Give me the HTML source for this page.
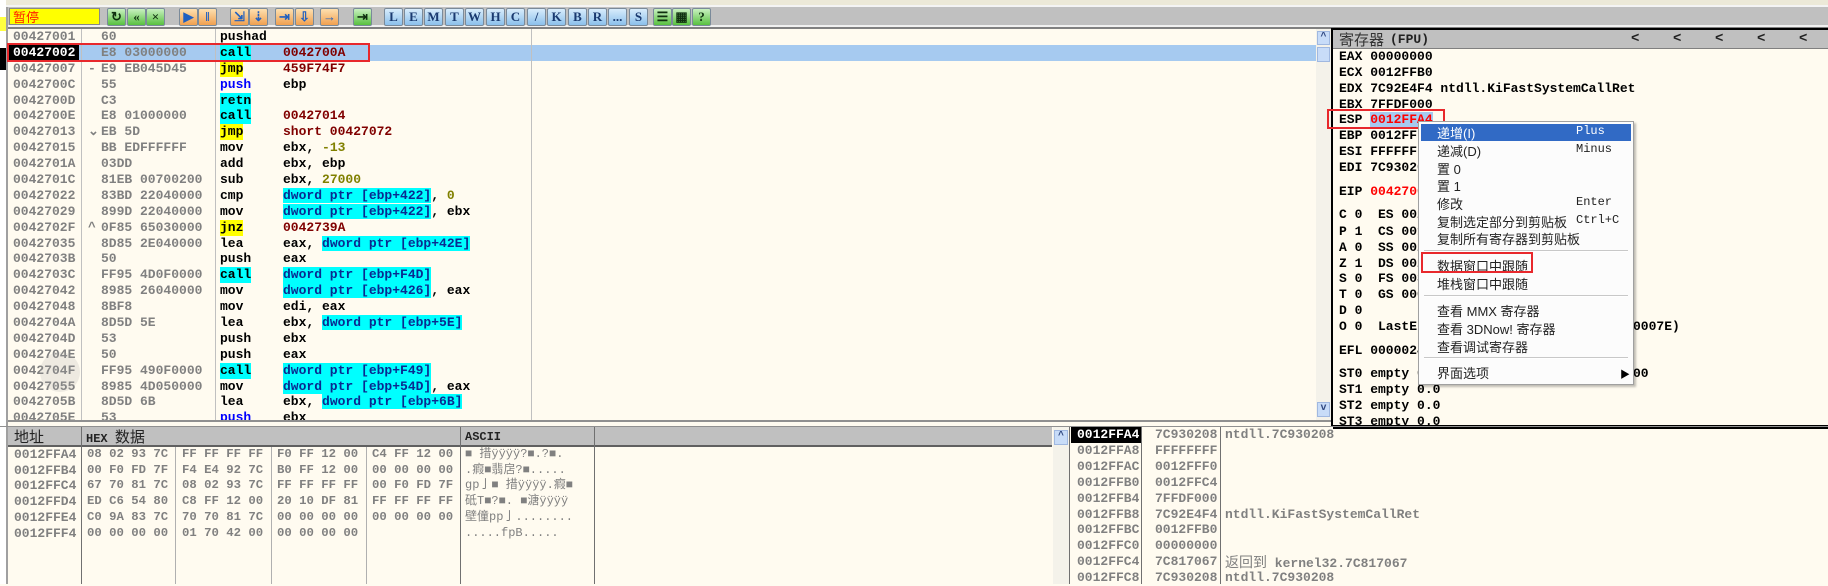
<!DOCTYPE html>
<html><head><meta charset="utf-8">
<style>
*{margin:0;padding:0;box-sizing:border-box}
body{width:1828px;height:584px;overflow:hidden;background:#fffbf0;position:relative;font-family:"Liberation Mono","Noto Sans CJK SC",monospace;font-weight:bold;font-size:13px}
.abs{position:absolute}
.tb{position:absolute;top:8px;width:19px;height:18px;border:1px solid #7a8a9a;border-radius:2px;font-family:"Liberation Serif",serif;font-size:13px;color:#1a3a70;text-align:center;line-height:16px;background:linear-gradient(#d8ecfc,#8cc0ec)}
.tb.o{background:linear-gradient(#fde0b0,#f0a050);color:#2060c0}
.tb.g{background:linear-gradient(#c8f0c0,#58c040);color:#103010}
#dis{position:absolute;left:8px;top:29px;width:1308px;height:391px;overflow:hidden}
.r{position:relative;height:15.9px;line-height:15.9px;white-space:pre}
.r span{position:absolute;top:0}
.ad{left:5px;color:#808080}
.hx{left:93px;color:#808080}
.mk{left:80px;color:#808080}
.mn{left:212px;color:#000}
.op{left:275px;color:#000}
.c{background:#00ffff}
.y{background:#ffff00}
.b{color:#0000ff}
.dr{color:#800000}
.ol{color:#808000}
.dp{background:#00ffff;color:#0a2a90}
.reg{position:absolute;left:1339px;white-space:pre;color:#000;line-height:16px}
.dm{position:absolute;white-space:pre;color:#808080;line-height:15.7px}
.hg{position:absolute;white-space:pre;color:#808080;line-height:15.7px;font-size:12.3px;top:447px}
.st{position:absolute;white-space:pre;color:#808080;line-height:15.9px}
.cm{position:absolute;left:1225px;white-space:pre;color:#808080;height:16px;line-height:16px}
.mi{position:absolute;left:1437px;font-family:"Liberation Sans","Noto Sans CJK SC",sans-serif;font-weight:normal;font-size:13px;color:#222;white-space:pre}
.sc{position:absolute;left:1576px;font-family:"Liberation Mono",monospace;font-weight:normal;font-size:12px;color:#222}
.sep{position:absolute;left:1424px;width:204px;height:2px;border-top:1px solid #c8c8c8;border-bottom:1px solid #fff}
</style></head><body>
<div class="abs" style="left:0;top:0;width:1828px;height:5px;background:#ece9d8"></div>
<div class="abs" style="left:0;top:5px;width:1828px;height:2px;background:#f4f4f4"></div>
<div class="abs" style="left:0;top:7px;width:1828px;height:19px;background:#c0c0c0"></div>
<div class="abs" style="left:0;top:25px;width:1828px;height:2px;background:#f0f0f0"></div>
<div class="abs" style="left:0;top:27px;width:1828px;height:2px;background:#808080"></div>
<div class="abs" style="left:0;top:0;width:6px;height:584px;background:#fff"></div>
<div class="abs" style="left:0;top:17px;width:6px;height:14px;background:#ffff40"></div>
<div class="abs" style="left:0;top:48px;width:6px;height:22px;background:#000"></div>
<div class="abs" style="left:6px;top:7px;width:2px;height:577px;background:#a0a0a0"></div>
<div class="abs" style="left:9px;top:8px;width:91px;height:17px;background:#ffff00;border:1px solid #888;color:#ff2000;font-family:'Noto Sans CJK SC',sans-serif;font-size:13px;font-weight:normal;line-height:15px;padding-left:3px">暂停</div>
<div class="tb g" style="left:107px">↻</div>
<div class="tb g" style="left:127px">«</div>
<div class="tb g" style="left:146px">×</div>
<div class="tb o" style="left:179px">▶</div>
<div class="tb o" style="left:198px">‖</div>
<div class="tb o" style="left:230px">⇲</div>
<div class="tb o" style="left:249px">⇣</div>
<div class="tb o" style="left:275px">⇥</div>
<div class="tb o" style="left:295px">⇩</div>
<div class="tb o" style="left:320px">→</div>
<div class="tb g" style="left:353px">⇥</div>
<div class="tb" style="left:384px">L</div>
<div class="tb" style="left:404px">E</div>
<div class="tb" style="left:424px">M</div>
<div class="tb" style="left:445px">T</div>
<div class="tb" style="left:465px">W</div>
<div class="tb" style="left:486px">H</div>
<div class="tb" style="left:506px">C</div>
<div class="tb" style="left:527px">/</div>
<div class="tb" style="left:547px">K</div>
<div class="tb" style="left:568px">B</div>
<div class="tb" style="left:588px">R</div>
<div class="tb" style="left:608px">...</div>
<div class="tb" style="left:629px">S</div>
<div class="tb g" style="left:653px">☰</div>
<div class="tb g" style="left:672px">▦</div>
<div class="tb g" style="left:692px">?</div>

<div class="abs" style="left:8px;top:45px;width:1308px;height:16px;background:#a6caf0"></div>
<div class="abs" style="left:81px;top:29px;width:1px;height:391px;background:#c0c0c0"></div>
<div class="abs" style="left:215px;top:29px;width:1px;height:391px;background:#c0c0c0"></div>
<div class="abs" style="left:531px;top:29px;width:1px;height:391px;background:#c0c0c0"></div>
<div id="dis">
<div class="r"><span class="ad">00427001</span><span class="hx">60</span><span class="mn">pushad</span></div>
<div class="r"><span class="ad" style="left:1px;background:#000;color:#fff;padding:0 4px">00427002</span><span class="hx">E8 03000000</span><span class="mn c">call</span><span class="op dr">0042700A</span></div>
<div class="r"><span class="ad">00427007</span><span class="mk">-</span><span class="hx">E9 EB045D45</span><span class="mn y">jmp</span><span class="op dr">459F74F7</span></div>
<div class="r"><span class="ad">0042700C</span><span class="hx">55</span><span class="mn b">push</span><span class="op">ebp</span></div>
<div class="r"><span class="ad">0042700D</span><span class="hx">C3</span><span class="mn c">retn</span></div>
<div class="r"><span class="ad">0042700E</span><span class="hx">E8 01000000</span><span class="mn c">call</span><span class="op dr">00427014</span></div>
<div class="r"><span class="ad">00427013</span><span class="mk">⌄</span><span class="hx">EB 5D</span><span class="mn y">jmp</span><span class="op dr">short 00427072</span></div>
<div class="r"><span class="ad">00427015</span><span class="hx">BB EDFFFFFF</span><span class="mn">mov</span><span class="op">ebx, <span class="ol" style="position:static">-13</span></span></div>
<div class="r"><span class="ad">0042701A</span><span class="hx">03DD</span><span class="mn">add</span><span class="op">ebx, ebp</span></div>
<div class="r"><span class="ad">0042701C</span><span class="hx">81EB 00700200</span><span class="mn">sub</span><span class="op">ebx, <span class="ol" style="position:static">27000</span></span></div>
<div class="r"><span class="ad">00427022</span><span class="hx">83BD 22040000</span><span class="mn">cmp</span><span class="op"><span class="dp" style="position:static">dword ptr [ebp+422]</span>, <span class="ol" style="position:static">0</span></span></div>
<div class="r"><span class="ad">00427029</span><span class="hx">899D 22040000</span><span class="mn">mov</span><span class="op"><span class="dp" style="position:static">dword ptr [ebp+422]</span>, ebx</span></div>
<div class="r"><span class="ad">0042702F</span><span class="mk">^</span><span class="hx">0F85 65030000</span><span class="mn y">jnz</span><span class="op dr">0042739A</span></div>
<div class="r"><span class="ad">00427035</span><span class="hx">8D85 2E040000</span><span class="mn">lea</span><span class="op">eax, <span class="dp" style="position:static">dword ptr [ebp+42E]</span></span></div>
<div class="r"><span class="ad">0042703B</span><span class="hx">50</span><span class="mn">push</span><span class="op">eax</span></div>
<div class="r"><span class="ad">0042703C</span><span class="hx">FF95 4D0F0000</span><span class="mn c">call</span><span class="op dp">dword ptr [ebp+F4D]</span></div>
<div class="r"><span class="ad">00427042</span><span class="hx">8985 26040000</span><span class="mn">mov</span><span class="op"><span class="dp" style="position:static">dword ptr [ebp+426]</span>, eax</span></div>
<div class="r"><span class="ad">00427048</span><span class="hx">8BF8</span><span class="mn">mov</span><span class="op">edi, eax</span></div>
<div class="r"><span class="ad">0042704A</span><span class="hx">8D5D 5E</span><span class="mn">lea</span><span class="op">ebx, <span class="dp" style="position:static">dword ptr [ebp+5E]</span></span></div>
<div class="r"><span class="ad">0042704D</span><span class="hx">53</span><span class="mn">push</span><span class="op">ebx</span></div>
<div class="r"><span class="ad">0042704E</span><span class="hx">50</span><span class="mn">push</span><span class="op">eax</span></div>
<div class="r"><span class="ad">0042704F</span><span class="hx">FF95 490F0000</span><span class="mn c">call</span><span class="op dp">dword ptr [ebp+F49]</span></div>
<div class="r"><span class="ad">00427055</span><span class="hx">8985 4D050000</span><span class="mn">mov</span><span class="op"><span class="dp" style="position:static">dword ptr [ebp+54D]</span>, eax</span></div>
<div class="r"><span class="ad">0042705B</span><span class="hx">8D5D 6B</span><span class="mn">lea</span><span class="op">ebx, <span class="dp" style="position:static">dword ptr [ebp+6B]</span></span></div>
<div class="r"><span class="ad">0042705E</span><span class="hx">53</span><span class="mn b">push</span><span class="op">ebx</span></div>
</div>
<div class="abs" style="left:7px;top:43px;width:363px;height:19px;border:2px solid #e8282c"></div>
<div class="abs" style="left:40px;top:352px;width:40px;height:40px;border-radius:50%;background:rgba(160,160,160,0.18)"></div>
<div class="abs" style="left:1316px;top:29px;width:15px;height:391px;background:#f4f2ea"></div>
<div class="abs" style="left:1317px;top:31px;width:13px;height:14px;background:#c8dcf8;border:1px solid #a0b8e0;color:#304880;font-size:10px;text-align:center;line-height:12px">^</div>
<div class="abs" style="left:1317px;top:47px;width:13px;height:15px;background:#c8dcf8;border:1px solid #a0b8e0"></div>
<div class="abs" style="left:1317px;top:402px;width:13px;height:15px;background:#c8dcf8;border:1px solid #a0b8e0;color:#304880;font-size:10px;text-align:center;line-height:12px">v</div>

<div class="abs" style="left:1331px;top:28px;width:497px;height:399px;border-left:2px solid #000;border-top:2px solid #000;border-bottom:2px solid #000"></div>
<div class="abs" style="left:1333px;top:30px;width:495px;height:19px;background:#c0c0c0;border-bottom:1px solid #808080"></div>
<div class="abs" style="left:1339px;top:30px;font-family:'Noto Sans CJK SC',sans-serif;font-weight:normal;font-size:15px;line-height:19px;color:#333">寄存器</div>
<div class="abs" style="left:1390px;top:30px;line-height:19px;color:#222">(FPU)</div>
<div class="abs" style="left:1631px;top:30px;line-height:19px;color:#222;white-space:pre;font-size:14px">&lt;    &lt;    &lt;    &lt;    &lt;</div>
<div class="reg" style="top:49px">EAX 00000000</div>
<div class="reg" style="top:65px">ECX 0012FFB0</div>
<div class="reg" style="top:81px">EDX 7C92E4F4 ntdll.KiFastSystemCallRet</div>
<div class="reg" style="top:97px">EBX 7FFDF000</div>
<div class="reg" style="top:112px">ESP <span style="background:#a6caf0;color:#ff0000">0012FFA4</span></div>
<div class="reg" style="top:128px">EBP 0012FFF0</div>
<div class="reg" style="top:144px">ESI FFFFFFFF</div>
<div class="reg" style="top:160px">EDI 7C930208</div>
<div class="reg" style="top:184px">EIP <span style="color:#ff0000">0042700A</span></div>
<div class="reg" style="top:207px">C 0  ES 0023</div>
<div class="reg" style="top:224px">P 1  CS 001B</div>
<div class="reg" style="top:240px">A 0  SS 0023</div>
<div class="reg" style="top:256px">Z 1  DS 0023</div>
<div class="reg" style="top:271px">S 0  FS 003B</div>
<div class="reg" style="top:287px">T 0  GS 0000</div>
<div class="reg" style="top:303px">D 0</div>
<div class="reg" style="top:319px">O 0  LastErr</div>
<div class="reg" style="top:319px;left:1633px">0007E)</div>
<div class="reg" style="top:343px">EFL 00000246</div>
<div class="reg" style="top:366px">ST0 empty 0.0</div>
<div class="reg" style="top:366px;left:1633px">00</div>
<div class="reg" style="top:382px">ST1 empty 0.0</div>
<div class="reg" style="top:398px">ST2 empty 0.0</div>
<div class="abs" style="left:1333px;top:412px;width:495px;height:13px;overflow:hidden"><div class="reg" style="left:6px;top:2px">ST3 empty 0.0</div></div>
<div class="abs" style="left:1333px;top:427px;width:495px;height:2px;background:#000"></div>
<div class="abs" style="left:1327px;top:109px;width:118px;height:20px;border:2px solid #e8282c"></div>

<div class="abs" style="left:1418px;top:121px;width:216px;height:264px;background:#fcfcfc;border:1px solid #a0a0a0;box-shadow:2px 2px 2px rgba(0,0,0,0.25)"></div>
<div class="abs" style="left:1421px;top:124px;width:210px;height:17px;background:#316ac5"></div>
<div class="mi" style="top:123px;color:#fff">递增(I)</div><div class="sc" style="top:124px;color:#fff">Plus</div>
<div class="mi" style="top:141px">递减(D)</div><div class="sc" style="top:142px">Minus</div>
<div class="mi" style="top:159px">置 0</div>
<div class="mi" style="top:176px">置 1</div>
<div class="mi" style="top:194px">修改</div><div class="sc" style="top:195px">Enter</div>
<div class="mi" style="top:212px">复制选定部分到剪贴板</div><div class="sc" style="top:213px">Ctrl+C</div>
<div class="mi" style="top:229px">复制所有寄存器到剪贴板</div>
<div class="sep" style="top:250px"></div>
<div class="mi" style="top:256px">数据窗口中跟随</div>
<div class="mi" style="top:274px">堆栈窗口中跟随</div>
<div class="sep" style="top:295px"></div>
<div class="mi" style="top:301px">查看 MMX 寄存器</div>
<div class="mi" style="top:319px">查看 3DNow! 寄存器</div>
<div class="mi" style="top:337px">查看调试寄存器</div>
<div class="sep" style="top:357px"></div>
<div class="mi" style="top:363px">界面选项</div>
<div class="abs" style="left:1620px;top:366px;font-size:10px;color:#000">▶</div>
<div class="abs" style="left:1421px;top:252px;width:112px;height:21px;border:2px solid #e8282c"></div>

<div class="abs" style="left:8px;top:420px;width:1323px;height:2px;background:#909090"></div>
<div class="abs" style="left:0;top:426px;width:1828px;height:1px;background:#909090"></div>

<div class="abs" style="left:8px;top:427px;width:1044px;height:20px;background:#c0c0c0;border-bottom:2px solid #606060"></div>
<div class="abs" style="left:81px;top:427px;width:1px;height:157px;background:#707070"></div>
<div class="abs" style="left:175px;top:447px;width:1px;height:137px;background:#b0b0b0"></div>
<div class="abs" style="left:271px;top:447px;width:1px;height:137px;background:#b0b0b0"></div>
<div class="abs" style="left:366px;top:447px;width:1px;height:137px;background:#b0b0b0"></div>
<div class="abs" style="left:460px;top:427px;width:1px;height:157px;background:#707070"></div>
<div class="abs" style="left:594px;top:427px;width:1px;height:157px;background:#707070"></div>
<div class="abs" style="left:14px;top:427px;font-family:'Noto Sans CJK SC',sans-serif;font-weight:normal;font-size:15px;line-height:20px;color:#222">地址</div>
<div class="abs" style="left:86px;top:427px;line-height:20px;color:#222;font-size:12px">HEX <span style="font-family:'Noto Sans CJK SC',sans-serif;font-weight:normal;font-size:15px">数据</span></div>
<div class="abs" style="left:465px;top:427px;line-height:20px;color:#222;font-size:12px">ASCII</div>
<div class="dm" style="left:14px;top:447px">0012FFA4
0012FFB4
0012FFC4
0012FFD4
0012FFE4
0012FFF4</div>
<div class="hg" style="left:87px">08 02 93 7C
00 F0 FD 7F
67 70 81 7C
ED C6 54 80
C0 9A 83 7C
00 00 00 00</div>
<div class="hg" style="left:182px">FF FF FF FF
F4 E4 92 7C
08 02 93 7C
C8 FF 12 00
70 70 81 7C
01 70 42 00</div>
<div class="hg" style="left:277px">F0 FF 12 00
B0 FF 12 00
FF FF FF FF
20 10 DF 81
00 00 00 00
00 00 00 00</div>
<div class="hg" style="left:372px">C4 FF 12 00
00 00 00 00
00 F0 FD 7F
FF FF FF FF
00 00 00 00</div>
<div class="dm" style="left:465px;top:447px;font-size:12px;font-weight:normal">■ 措ÿÿÿÿ?■.?■.
.瘕■翡扂?■.....
gp亅■ 措ÿÿÿÿ.瘕■
砥T■?■. ■溏ÿÿÿÿ
壁僮pp亅........
.....fpB.....</div>
<div class="abs" style="left:1053px;top:427px;width:16px;height:157px;background:#f4f2ea"></div>
<div class="abs" style="left:1054px;top:430px;width:14px;height:15px;background:#c8dcf8;border:1px solid #a0b8e0;color:#304880;font-size:10px;text-align:center;line-height:12px">^</div>
<div class="abs" style="left:1069px;top:427px;width:1px;height:157px;background:#707070"></div>
<div class="abs" style="left:1141px;top:427px;width:1px;height:157px;background:#707070"></div>
<div class="abs" style="left:1220px;top:427px;width:1px;height:157px;background:#707070"></div>
<div class="abs" style="left:1071px;top:427px;width:70px;height:16px;background:#000"></div>
<div class="st" style="left:1077px;top:427px"><span style="color:#fff">0012FFA4</span>
0012FFA8
0012FFAC
0012FFB0
0012FFB4
0012FFB8
0012FFBC
0012FFC0
0012FFC4
0012FFC8</div>
<div class="st" style="left:1155px;top:427px">7C930208
FFFFFFFF
0012FFF0
0012FFC4
7FFDF000
7C92E4F4
0012FFB0
00000000
7C817067
7C930208</div>
<div class="cm" style="top:427px">ntdll.7C930208</div>
<div class="cm" style="top:506.5px">ntdll.KiFastSystemCallRet</div>
<div class="cm" style="top:554px"><span style="font-family:'Noto Sans CJK SC',sans-serif;font-weight:normal;font-size:14px;line-height:16px">返回到</span> kernel32.7C817067</div>
<div class="cm" style="top:570px">ntdll.7C930208</div>
</body></html>
